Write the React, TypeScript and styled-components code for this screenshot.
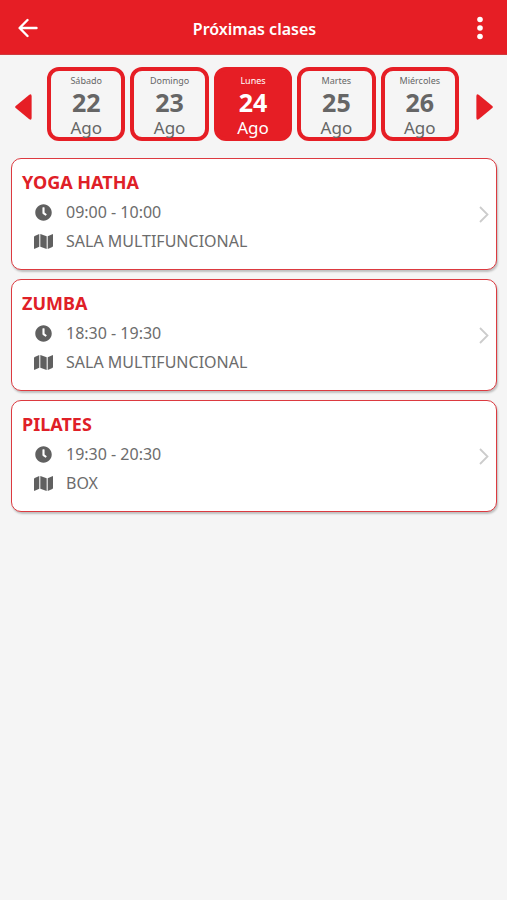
import React, { useState } from "react";
import styled, { createGlobalStyle } from "styled-components";
import { FaClock, FaMap } from "react-icons/fa";

const RED = "#e61e25";

const GlobalStyle = createGlobalStyle`
  * { box-sizing: border-box; }
  body {
    margin: 0;
    min-height: 100vh;
    background: #f5f5f5;
    color: #666;
    font-family: "Noto Sans", "Open Sans", sans-serif;
  }
  button { font: inherit; color: inherit; cursor: pointer; }
`;

const Header = styled.header`
  display: grid;
  grid-template-columns: 56px 1fr 54px;
  align-items: center;
  height: 55px;
  background: ${RED};
  border-bottom: 1px solid #cf3a3e;
  color: #fff;
`;

const Title = styled.h1`
  margin: 0;
  padding-top: 3px;
  font-size: 16px;
  line-height: 24px;
  font-weight: 600;
  text-align: center;
`;

const IconButton = styled.button`
  display: flex;
  align-items: center;
  justify-content: center;
  height: 54px;
  padding: 2px 0 0;
  border: 0;
  background: none;
`;

const DayPicker = styled.nav`
  display: grid;
  grid-template-columns: 47px 1fr 48px;
  padding: 12px 0 0;
`;

const Days = styled.div`
  display: grid;
  grid-template-columns: repeat(5, 1fr);
  gap: 5px;
`;

const ArrowButton = styled.button`
  display: flex;
  align-items: center;
  justify-content: center;
  padding: 5px 0 0;
  border: 0;
  background: none;

  &:last-child { padding-left: 3px; }
`;

const DayButton = styled.button<{ $active: boolean }>`
  display: flex;
  flex-direction: column;
  align-items: center;
  height: 74px;
  padding: 3px 0 0;
  border: 4px solid ${RED};
  border-radius: 12px;
  background: ${(p) => (p.$active ? RED : "#f5f5f5")};
  color: ${(p) => (p.$active ? "#fff" : "#666")};
`;

const Weekday = styled.span`
  font-size: 9px;
  line-height: 13px;
`;

const DayNumber = styled.strong`
  font-size: 25px;
  line-height: 30px;
  font-weight: 700;
`;

const Month = styled.span`
  font-size: 17px;
  line-height: 22px;
`;

const ClassList = styled.ul`
  display: flex;
  flex-direction: column;
  gap: 9px;
  margin: 0;
  padding: 17px 10px 17px 11px;
  list-style: none;
`;

const ClassCard = styled.button`
  display: flex;
  align-items: center;
  justify-content: space-between;
  width: 100%;
  height: 112px;
  padding: 0 7px 3px 10px;
  border: 1px solid #dc3a40;
  border-radius: 10px;
  background: #fff;
  box-shadow: 1px 2px 2px rgba(0, 0, 0, 0.22);
  text-align: left;
`;

const Details = styled.span`
  display: flex;
  flex-direction: column;
`;

const ClassName = styled.strong`
  padding-bottom: 3px;
  color: #df2027;
  font-size: 18px;
  line-height: 26px;
  font-weight: 700;
`;

const InfoRow = styled.span`
  display: grid;
  grid-template-columns: 20px auto;
  align-items: center;
  gap: 12px;
  padding-left: 12px;
  font-size: 16px;
  line-height: 29px;
  color: #6c6c6c;
`;

const IconSlot = styled.span`
  display: flex;
  justify-content: center;
  width: 19px;
  color: #606060;
`;

const Chevron = styled.span`
  display: flex;
  padding-top: 3px;
`;

const days = [
  { weekday: "Sábado", day: 22 },
  { weekday: "Domingo", day: 23 },
  { weekday: "Lunes", day: 24 },
  { weekday: "Martes", day: 25 },
  { weekday: "Miércoles", day: 26 },
];

const classes = [
  { name: "YOGA HATHA", time: "09:00 - 10:00", room: "SALA MULTIFUNCIONAL" },
  { name: "ZUMBA", time: "18:30 - 19:30", room: "SALA MULTIFUNCIONAL" },
  { name: "PILATES", time: "19:30 - 20:30", room: "BOX" },
];

const BackIcon = () => (
  <svg width="20" height="20" viewBox="0 0 20 20" fill="none" stroke="#fff" strokeWidth="2.4" strokeLinecap="round" strokeLinejoin="round">
    <path d="M18.500 10H2M9.500 2L1.600 10l7.900 8" />
  </svg>
);

const MoreIcon = () => (
  <svg width="6" height="24" viewBox="0 0 6 24" fill="#fff">
    <circle cx="3" cy="3.500" r="2.800" />
    <circle cx="3" cy="12" r="2.800" />
    <circle cx="3" cy="20.500" r="2.800" />
  </svg>
);

const LeftArrow = () => (
  <svg width="17" height="26" viewBox="0 0 17 26" fill={RED}>
    <path d="M.7 12L14 .9Q16.600-.6 16.600 2v22q0 2.600-2.600 1.100L.7 14Q-.4 13 .7 12z" />
  </svg>
);

const RightArrow = () => (
  <svg width="17" height="26" viewBox="0 0 17 26" fill={RED}>
    <path d="M16.300 12L3 .9Q.4-.6.4 2v22q0 2.600 2.600 1.100L16.300 14q1.100-1 0-2z" />
  </svg>
);

const ChevronIcon = () => (
  <svg width="10" height="17" viewBox="0 0 10 17" fill="none" stroke="#ccc" strokeWidth="1.800">
    <path d="M1 1l7.500 7.500L1 16" />
  </svg>
);

export default function App() {
  const [selected, setSelected] = useState(24);
  return (
    <>
      <GlobalStyle />
      <Header>
        <IconButton aria-label="Volver"><BackIcon /></IconButton>
        <Title>Próximas clases</Title>
        <IconButton aria-label="Más opciones"><MoreIcon /></IconButton>
      </Header>
      <main>
        <DayPicker aria-label="Días">
          <ArrowButton aria-label="Días anteriores"><LeftArrow /></ArrowButton>
          <Days>
            {days.map((d) => (
              <DayButton
                key={d.day}
                $active={d.day === selected}
                aria-pressed={d.day === selected}
                onClick={() => setSelected(d.day)}
              >
                <Weekday>{d.weekday}</Weekday>
                <DayNumber>{d.day}</DayNumber>
                <Month>Ago</Month>
              </DayButton>
            ))}
          </Days>
          <ArrowButton aria-label="Días siguientes"><RightArrow /></ArrowButton>
        </DayPicker>
        <ClassList>
          {classes.map((c) => (
            <li key={c.name}>
              <ClassCard>
                <Details>
                  <ClassName>{c.name}</ClassName>
                  <InfoRow><IconSlot><FaClock size={17} /></IconSlot>{c.time}</InfoRow>
                  <InfoRow><IconSlot><FaMap size={19} /></IconSlot>{c.room}</InfoRow>
                </Details>
                <Chevron><ChevronIcon /></Chevron>
              </ClassCard>
            </li>
          ))}
        </ClassList>
      </main>
    </>
  );
}
